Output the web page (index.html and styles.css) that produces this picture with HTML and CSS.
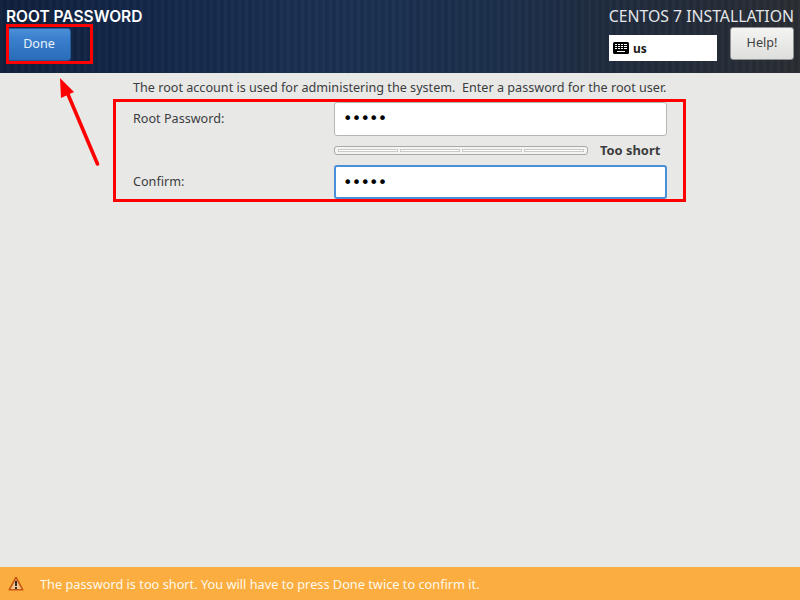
FILE: index.html
```html
<!DOCTYPE html>
<html lang="en">
<head>
<meta charset="utf-8">
<title>Root Password</title>
<link rel="stylesheet" href="styles.css">
</head>
<body>
<div class="screen">
  <header class="topbar">
    <div class="top-left">
      <h1 class="title">ROOT PASSWORD</h1>
      <button class="btn btn-done">Done</button>
    </div>
    <div class="top-right">
      <div class="product">CENTOS 7 INSTALLATION</div>
      <div class="top-controls">
        <div class="layout-box">
          <svg class="kbd" width="16" height="12" viewBox="0 0 16 12">
            <rect width="16" height="12" rx="1.5" fill="#000"/>
            <g fill="#fff">
              <rect x="2" y="2" width="2" height="1"/><rect x="5" y="2" width="2" height="1"/><rect x="8" y="2" width="2" height="1"/><rect x="11" y="2" width="3" height="1"/>
              <rect x="2" y="4" width="2" height="1"/><rect x="5" y="4" width="2" height="1"/><rect x="8" y="4" width="2" height="1"/><rect x="11" y="4" width="3" height="1"/>
              <rect x="2" y="6" width="2" height="1"/><rect x="5" y="6" width="2" height="1"/><rect x="8" y="6" width="2" height="1"/><rect x="11" y="6" width="3" height="1"/>
              <rect x="4" y="9" width="8" height="1"/>
            </g>
          </svg>
          <span class="layout-name">us</span>
        </div>
        <button class="btn btn-help">Help!</button>
      </div>
    </div>
  </header>

  <main class="content">
    <p class="intro">The root account is used for administering the system.&nbsp; Enter a password for the root user.</p>
    <div class="form">
      <label class="label">Root Password:</label>
      <div class="field"><span class="dots">•••••</span></div>
      <div class="strength-row">
        <div class="meter"><i></i><i></i><i></i><i></i></div>
        <span class="strength-text">Too short</span>
      </div>
      <label class="label">Confirm:</label>
      <div class="field field-focus"><span class="dots">•••••</span></div>
    </div>
  </main>

  <footer class="warnbar">
    <svg class="warn-icon" width="16" height="15" viewBox="0 0 16 15">
      <path d="M8 1.5 L14.8 13.8 H1.2 Z" fill="#f6c58c" stroke="#c9560f" stroke-width="1.6" stroke-linejoin="round"/>
      <rect x="7" y="5" width="2" height="5" fill="#2e2e2e"/>
      <rect x="7" y="11" width="2" height="2" fill="#2e2e2e"/>
    </svg>
    <span class="warn-text">The password is too short. You will have to press Done twice to confirm it.</span>
  </footer>

  <div class="mark mark-done"></div>
  <div class="mark mark-form"></div>
  <svg class="arrow" width="60" height="100" viewBox="0 0 60 100">
    <line x1="38.5" y1="87" x2="8" y2="15" stroke="#f00" stroke-width="3.6" stroke-linecap="round"/>
    <polygon points="1,1 2,21 15,15" fill="#f00"/>
  </svg>
</div>
</body>
</html>
```

FILE: styles.css
```css
* { box-sizing: border-box; }
html, body { margin: 0; padding: 0; }
body { width: 800px; height: 600px; overflow: hidden; font-family: "Noto Sans", "Open Sans", sans-serif; }
.screen { position: relative; width: 800px; height: 600px; display: flex; flex-direction: column; background: #e8e8e7; }

.topbar {
  height: 73px;
  flex: none;
  display: flex;
  justify-content: space-between;
  padding: 0 6px 0 7px;
  background:
    repeating-linear-gradient(90deg, rgba(255,255,255,.018) 0 3px, rgba(0,0,0,.03) 3px 7px),
    linear-gradient(90deg, #10203c 0%, #14294c 22%, #1a3153 40%, #1c2f4b 62%, #212b3c 80%, #2a2d33 100%);
}
.top-left { display: flex; flex-direction: column; align-items: flex-start; }
.title {
  margin: 8px 0 0 -1px;
  font: 600 15.5px/17px Inter, sans-serif;
  color: #fff;
}
.btn { display: block; padding: 0; font-family: "Noto Sans", sans-serif; font-size: 12.6px; border-radius: 3px; }
.btn-done {
  width: 64px; height: 33px; margin-top: 3px; padding-bottom: 3px;
  color: #eaf2fb;
  border: 1px solid #1f5a9c;
  background: linear-gradient(180deg, #4c8fd8 0%, #3a80ce 30%, #2a6cb8 100%);
}
.top-right { display: flex; flex-direction: column; align-items: flex-end; }
.product { margin-top: 7px; font-size: 15.8px; line-height: 19px; color: #e4e6ea; white-space: nowrap; }
.top-controls { display: flex; gap: 13px; margin-top: 1px; align-items: flex-start; }
.layout-box {
  width: 108px; height: 26px; margin-top: 8px;
  background: #fff; display: flex; align-items: center; gap: 4px; padding-left: 4px;
}
.kbd { display: block; }
.layout-name { font-size: 12px; font-weight: 700; color: #1a1a1a; }
.btn-help {
  width: 64px; height: 33px; padding-bottom: 2px;
  color: #3c3f40;
  border: 1px solid #8f9293;
  background: linear-gradient(180deg, #f4f4f3 0%, #dededc 100%);
}

.content { flex: 1; padding: 6px 0 0 133px; color: #3b3d3e; font-size: 12.62px; }
.intro { margin: 0; line-height: 18px; white-space: nowrap; }
.form {
  display: grid;
  grid-template-columns: 201px 333px;
  grid-template-rows: 34px 29px 34px;
  margin-top: 5px;
  align-items: center;
}
.label { line-height: 18px; }
.field {
  height: 34px;
  background: #fff;
  border: 1px solid #b6b6b3;
  border-radius: 3px;
  padding-left: 8px;
  display: flex; align-items: center;
}
.field-focus { border: 2px solid #4a90d9; padding-left: 7px; padding-top: 1px; }
.dots { color: #000; font-size: 16px; letter-spacing: -0.75px; line-height: 1; font-family: "DejaVu Sans", sans-serif; }
.strength-row { grid-column: 2; display: flex; align-items: center; }
.meter {
  width: 254px; height: 9px; flex: none;
  border: 1px solid #a9a9a6; border-radius: 3px;
  background: #f4f4f3;
  display: flex; gap: 2px; padding: 2px 3px;
}
.meter i { flex: 1; background: #fff; border: 1px solid #c9c9c7; }
.strength-text { margin: 0 0 2px 12px; font-weight: 700; font-size: 12.9px; color: #3b3d3e; }

.warnbar {
  height: 33px; flex: none;
  background: #fbae3f;
  display: flex; align-items: center;
  padding-left: 8px;
}
.warn-icon { display: block; }
.warn-text { margin-left: 16px; font-size: 12.76px; color: #fff8ec; }

.mark { position: absolute; border: 3px solid #f00; }
.mark-done { left: 6px; top: 24px; width: 87px; height: 40px; }
.mark-form { left: 113px; top: 99px; width: 573px; height: 103px; }
.arrow { position: absolute; left: 59px; top: 77px; }
```
